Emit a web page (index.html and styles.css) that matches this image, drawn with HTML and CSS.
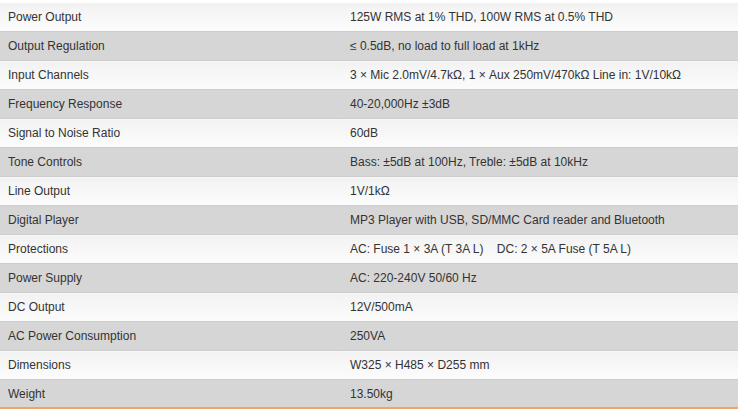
FILE: index.html
```html
<!DOCTYPE html>
<html>
<head>
<meta charset="utf-8">
<link rel="stylesheet" href="styles.css">
</head>
<body>
<div class="wrap">
<table class="specs">
<tr class="odd"><td class="k">Power Output</td><td class="v">125W RMS at 1% THD, 100W RMS at 0.5% THD</td></tr>
<tr class="even"><td class="k">Output Regulation</td><td class="v">≤ 0.5dB, no load to full load at 1kHz</td></tr>
<tr class="odd"><td class="k">Input Channels</td><td class="v">3 × Mic 2.0mV/4.7kΩ, 1 × Aux 250mV/470kΩ Line in: 1V/10kΩ</td></tr>
<tr class="even"><td class="k">Frequency Response</td><td class="v">40-20,000Hz ±3dB</td></tr>
<tr class="odd"><td class="k">Signal to Noise Ratio</td><td class="v">60dB</td></tr>
<tr class="even"><td class="k">Tone Controls</td><td class="v">Bass: ±5dB at 100Hz, Treble: ±5dB at 10kHz</td></tr>
<tr class="odd"><td class="k">Line Output</td><td class="v">1V/1kΩ</td></tr>
<tr class="even"><td class="k">Digital Player</td><td class="v">MP3 Player with USB, SD/MMC Card reader and Bluetooth</td></tr>
<tr class="odd"><td class="k">Protections</td><td class="v">AC: Fuse 1 × 3A (T 3A L)&nbsp;&nbsp;&nbsp; DC: 2 × 5A Fuse (T 5A L)</td></tr>
<tr class="even"><td class="k">Power Supply</td><td class="v">AC: 220-240V 50/60 Hz</td></tr>
<tr class="odd"><td class="k">DC Output</td><td class="v">12V/500mA</td></tr>
<tr class="even"><td class="k">AC Power Consumption</td><td class="v">250VA</td></tr>
<tr class="odd"><td class="k">Dimensions</td><td class="v">W325 × H485 × D255 mm</td></tr>
<tr class="even last"><td class="k">Weight</td><td class="v">13.50kg</td></tr>
</table>
</div>
</body>
</html>
```
FILE: styles.css
```css
html, body {
  margin: 0;
  padding: 0;
  background: #ffffff;
}
.wrap {
  padding-top: 3px;
  width: 738px;
}
.specs {
  width: 738px;
  border-collapse: collapse;
  font-family: "Liberation Sans", Arial, sans-serif;
  font-size: 12px;
  color: #333333;
  border-bottom: 2px solid #f0a468;
}
.specs td {
  height: 28px;
  padding: 0 8px;
  vertical-align: middle;
  border-bottom: 1px solid #cdcdcd;
  white-space: nowrap;
}
.specs .k {
  width: 326px;
}
.specs .v {
  padding-left: 8px;
}
.odd td {
  background: linear-gradient(#f2f2f2, #fcfcfc);
}
.even td {
  background: #d6d6d6;
}
.last td {
  height: 27px;
  border-bottom: 1px solid #e8e0da;
}
```
